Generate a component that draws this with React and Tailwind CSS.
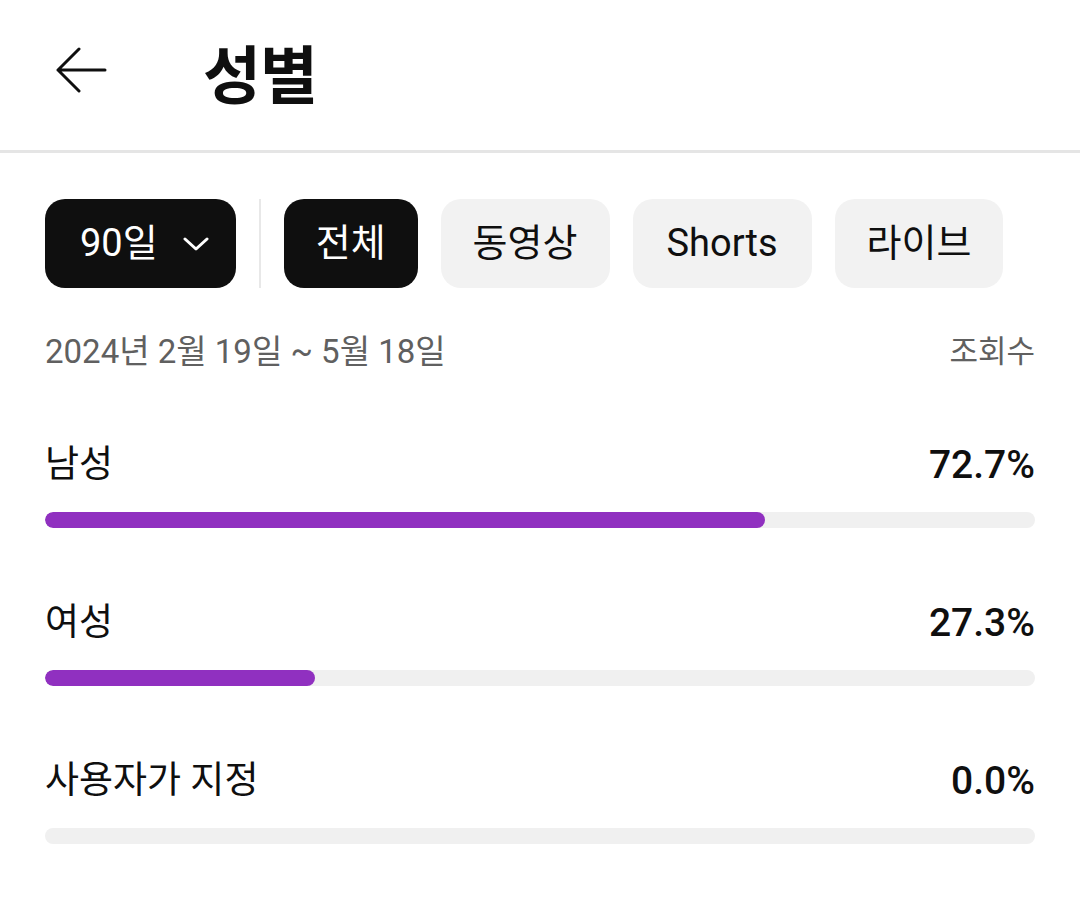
import React from "react";

const rows = [
  { label: "남성", value: 72.7 },
  { label: "여성", value: 27.3 },
  { label: "사용자가 지정", value: 0.0 },
];

const chips = ["동영상", "Shorts", "라이브"];

const BackArrow = () => (
  <svg width="52" height="46" viewBox="0 0 52 46" fill="none">
    <path
      d="M50 23H3M24 2L3 23l21 21"
      stroke="#0f0f0f"
      strokeWidth="3"
      strokeLinecap="round"
      strokeLinejoin="round"
    />
  </svg>
);

const Chevron = () => (
  <svg width="26" height="14" viewBox="0 0 26 14" fill="none">
    <path
      d="M2 2l11 10L24 2"
      stroke="#ffffff"
      strokeWidth="3"
      strokeLinecap="round"
      strokeLinejoin="round"
    />
  </svg>
);

export default function App() {
  return (
    <div
      className="w-[1080px] h-[914px] bg-white text-[#0f0f0f] overflow-hidden"
      style={{ fontFamily: 'Roboto, "Noto Sans CJK KR", sans-serif' }}
    >
      {/* Header */}
      <div className="h-[153px] flex items-center border-b-[3px] border-[#e5e5e5]">
        <div className="ml-[55px] mb-[10px]">
          <BackArrow />
        </div>
        <h1 className="ml-[96px] mt-[2px] text-[63px] font-bold leading-none tracking-[-1px]">
          성별
        </h1>
      </div>

      <div className="px-[45px]">
        {/* Filter chips */}
        <div className="mt-[46px] flex items-stretch gap-[23px] h-[89px]">
          <button className="flex items-center bg-[#0f0f0f] text-white rounded-[20px] pl-[35px] pr-[27px] text-[38px]">
            <span>90일</span>
            <span className="ml-[25px]">
              <Chevron />
            </span>
          </button>
          <div className="w-[2px] bg-[#e8e8e8]" />
          <button className="flex items-center bg-[#0f0f0f] text-white rounded-[20px] px-[32px] text-[38px]">
            전체
          </button>
          {chips.map((c) => (
            <button
              key={c}
              className={`flex items-center bg-[#f2f2f2] text-[#0f0f0f] rounded-[20px] text-[38px] ${
                c === "Shorts" ? "px-[34px]" : "px-[32px]"
              }`}
            >
              {c}
            </button>
          ))}
        </div>

        {/* Date range */}
        <div className="mt-[44px] flex justify-between items-center leading-[40px] text-[#606060]">
          <span className="text-[33px]">2024년 2월 19일 ~ 5월 18일</span>
          <span className="text-[31px]">조회수</span>
        </div>

        {/* Rows */}
        {rows.map((r, i) => (
          <div key={r.label} className={i === 0 ? "mt-[71px]" : "mt-[73px]"}>
            <div className="flex justify-between items-center leading-[44px]">
              <span className="text-[37px]">{r.label}</span>
              <span className="text-[39px] font-medium">{r.value.toFixed(1)}%</span>
            </div>
            <div className="mt-[25px] h-[16px] rounded-full bg-[#f0f0f0] overflow-hidden">
              <div
                className="h-full rounded-full bg-[#9030c0]"
                style={{ width: `${r.value}%` }}
              />
            </div>
          </div>
        ))}
      </div>
    </div>
  );
}
